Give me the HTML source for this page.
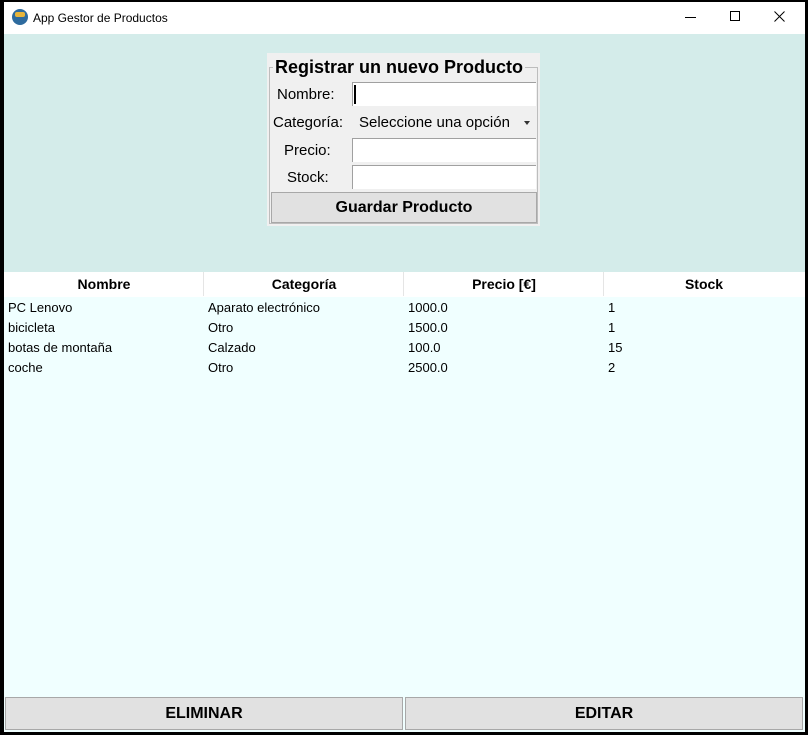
<!DOCTYPE html>
<html><head><meta charset="utf-8"><style>
*{margin:0;padding:0;box-sizing:border-box}
body{width:808px;height:735px;background:#000;position:relative;overflow:hidden;font-family:"Liberation Sans",sans-serif}
.a{position:absolute}
.t{white-space:nowrap}
</style></head><body>
<div class="a" style="left:4px;top:2px;width:801px;height:32px;background:#fff"></div>
<div class="a" style="left:12px;top:9px;width:16px;height:16px;border-radius:50%;background:#2e6b9e"></div>
<div class="a" style="left:15px;top:12px;width:10px;height:5px;background:#e8b53a;border-radius:2px"></div>
<div class="a t" style="left:33px;top:11px;font-size:12px;color:#000">App Gestor de Productos</div>
<div class="a" style="left:685px;top:17px;width:11px;height:1px;background:#000"></div>
<div class="a" style="left:730px;top:11px;width:10px;height:10px;border:1px solid #000"></div>
<svg class="a" style="left:774px;top:11px" width="11" height="11"><path d="M0.5 0.5L10.5 10.5M10.5 0.5L0.5 10.5" stroke="#000" stroke-width="1"/></svg>
<div class="a" style="left:4px;top:34px;width:801px;height:238px;background:#d4ecea"></div>
<div class="a" style="left:267px;top:53px;width:273px;height:173px;background:#f0f0f0"></div>
<div class="a" style="left:269px;top:67px;width:269px;height:157px;border:1px solid #bdbdbd"></div>
<div class="a t" style="left:273px;top:57px;font-size:18px;font-weight:bold;background:#f0f0f0;padding:0 2px">Registrar un nuevo Producto</div>
<div class="a t" style="left:277px;top:86px;font-size:15px">Nombre:</div>
<div class="a" style="left:352px;top:82px;width:184px;height:24px;background:#fff;border-top:1px solid #a0a0a0;border-left:1px solid #a0a0a0"></div>
<div class="a" style="left:354px;top:85px;width:2px;height:19px;background:#000"></div>
<div class="a t" style="left:273px;top:114px;font-size:15px">Categoría:</div>
<div class="a t" style="left:359px;top:114px;font-size:15px">Seleccione una opción</div>
<div class="a" style="left:524px;top:121px;border-left:3px solid transparent;border-right:3px solid transparent;border-top:4px solid #333"></div>
<div class="a t" style="left:284px;top:142px;font-size:15px">Precio:</div>
<div class="a" style="left:352px;top:138px;width:184px;height:24px;background:#fff;border:1px solid #a0a0a0;border-right:none;border-bottom:none"></div>
<div class="a t" style="left:287px;top:169px;font-size:15px">Stock:</div>
<div class="a" style="left:352px;top:165px;width:184px;height:24px;background:#fff;border:1px solid #a0a0a0;border-right:none;border-bottom:none"></div>
<div class="a" style="left:271px;top:192px;width:266px;height:31px;background:#e1e1e1;border:1px solid #a8a8a8;font-size:16px;font-weight:bold;text-align:center;line-height:30px">Guardar Producto</div>
<div class="a" style="left:4px;top:272px;width:801px;height:25px;background:#fff"></div>
<div class="a" style="left:4px;top:297px;width:801px;height:400px;background:#f0ffff"></div>
<div class="a" style="left:203px;top:272px;width:1px;height:24px;background:#e5e5e5"></div>
<div class="a" style="left:403px;top:272px;width:1px;height:24px;background:#e5e5e5"></div>
<div class="a" style="left:603px;top:272px;width:1px;height:24px;background:#e5e5e5"></div>
<div class="a t" style="left:4px;width:200px;top:276px;text-align:center;font-size:14px;font-weight:bold">Nombre</div>
<div class="a t" style="left:204px;width:200px;top:276px;text-align:center;font-size:14px;font-weight:bold">Categoría</div>
<div class="a t" style="left:404px;width:200px;top:276px;text-align:center;font-size:14px;font-weight:bold">Precio [€]</div>
<div class="a t" style="left:604px;width:200px;top:276px;text-align:center;font-size:14px;font-weight:bold">Stock</div>
<div class="a" style="left:8px;top:298px;font-size:13px;line-height:20px">PC Lenovo<br>bicicleta<br>botas de montaña<br>coche</div>
<div class="a" style="left:208px;top:298px;font-size:13px;line-height:20px">Aparato electrónico<br>Otro<br>Calzado<br>Otro</div>
<div class="a" style="left:408px;top:298px;font-size:13px;line-height:20px">1000.0<br>1500.0<br>100.0<br>2500.0</div>
<div class="a" style="left:608px;top:298px;font-size:13px;line-height:20px">1<br>1<br>15<br>2</div>
<div class="a" style="left:4px;top:697px;width:801px;height:35px;background:#f0ffff"></div>
<div class="a" style="left:5px;top:697px;width:398px;height:33px;background:#e1e1e1;border:1px solid #a8a8a8;font-size:16px;font-weight:bold;text-align:center;line-height:32px">ELIMINAR</div>
<div class="a" style="left:405px;top:697px;width:398px;height:33px;background:#e1e1e1;border:1px solid #a8a8a8;font-size:16px;font-weight:bold;text-align:center;line-height:32px">EDITAR</div>
</body></html>
